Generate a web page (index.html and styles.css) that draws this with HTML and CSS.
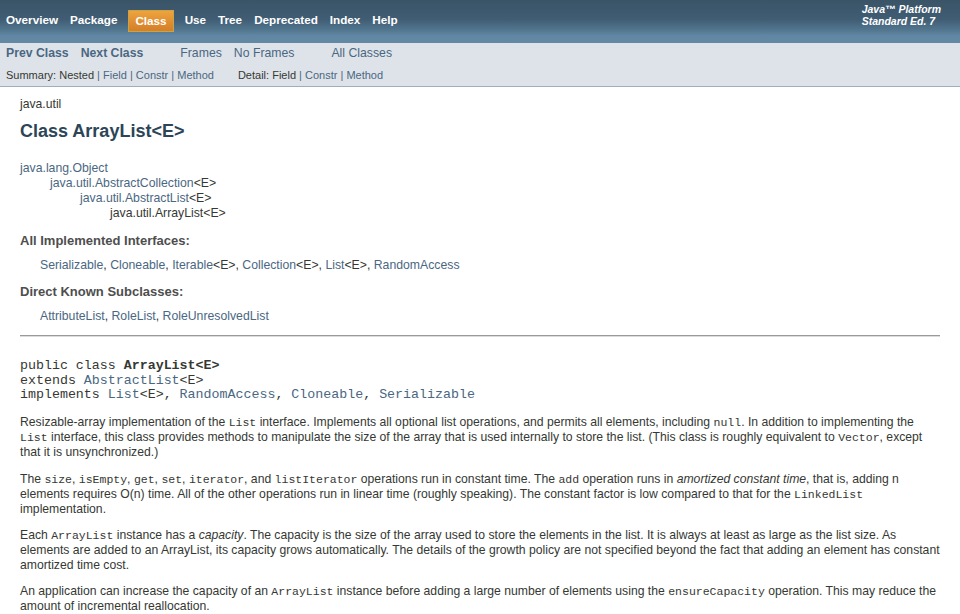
FILE: index.html
```html
<!DOCTYPE html>
<html>
<head>
<meta charset="utf-8">
<title>ArrayList</title>
<link rel="stylesheet" href="styles.css">
</head>
<body>
<div class="topnav">
  <ul class="navlist">
    <li>Overview</li>
    <li>Package</li>
    <li class="current">Class</li>
    <li>Use</li>
    <li>Tree</li>
    <li>Deprecated</li>
    <li>Index</li>
    <li>Help</li>
  </ul>
  <div class="about">Java™&nbsp;Platform<br>Standard&nbsp;Ed.&nbsp;7</div>
</div>
<div class="subnav">
  <div class="subrow">
    <ul class="sublist bold"><li><a href="#">Prev Class</a></li><li><a href="#">Next Class</a></li></ul>
    <ul class="sublist"><li><a href="#">Frames</a></li><li><a href="#">No Frames</a></li></ul>
    <ul class="sublist"><li><a href="#">All Classes</a></li></ul>
  </div>
  <div class="subrow2">
    <ul class="sumlist"><li>Summary:&nbsp;</li><li>Nested&nbsp;<a href="#">|&nbsp;</a></li><li><a href="#">Field&nbsp;|&nbsp;</a></li><li><a href="#">Constr&nbsp;|&nbsp;</a></li><li><a href="#">Method</a></li></ul>
    <ul class="sumlist"><li>Detail:&nbsp;</li><li>Field&nbsp;<a href="#">|&nbsp;</a></li><li><a href="#">Constr&nbsp;|&nbsp;</a></li><li><a href="#">Method</a></li></ul>
  </div>
</div>
<div class="header">
  <div class="subtitle">java.util</div>
  <h2 class="title">Class ArrayList&lt;E&gt;</h2>
</div>
<div class="content">
  <div class="inherit">
    <div class="ilevel"><a href="#">java.lang.Object</a></div>
    <div class="ilevel indent1"><a href="#">java.util.AbstractCollection</a>&lt;E&gt;</div>
    <div class="ilevel indent2"><a href="#">java.util.AbstractList</a>&lt;E&gt;</div>
    <div class="ilevel indent3">java.util.ArrayList&lt;E&gt;</div>
  </div>
  <dl class="info">
    <dt>All Implemented Interfaces:</dt>
    <dd><a href="#">Serializable</a>, <a href="#">Cloneable</a>, <a href="#">Iterable</a>&lt;E&gt;, <a href="#">Collection</a>&lt;E&gt;, <a href="#">List</a>&lt;E&gt;, <a href="#">RandomAccess</a></dd>
    <dt class="dt2">Direct Known Subclasses:</dt>
    <dd><a href="#">AttributeList</a>, <a href="#">RoleList</a>, <a href="#">RoleUnresolvedList</a></dd>
  </dl>
  <hr class="rule">
<pre class="sig">public class <b>ArrayList&lt;E&gt;</b>
extends <a href="#">AbstractList</a>&lt;E&gt;
implements <a href="#">List</a>&lt;E&gt;, <a href="#">RandomAccess</a>, <a href="#">Cloneable</a>, <a href="#">Serializable</a></pre>
  <div class="block">
    <p>Resizable-array implementation of the <code>List</code> interface. Implements all optional list operations, and permits all elements, including <code>null</code>. In addition to implementing the <code>List</code> interface, this class provides methods to manipulate the size of the array that is used internally to store the list. (This class is roughly equivalent to <code>Vector</code>, except that it is unsynchronized.)</p>
    <p>The <code>size</code>, <code>isEmpty</code>, <code>get</code>, <code>set</code>, <code>iterator</code>, and <code>listIterator</code> operations run in constant time. The <code>add</code> operation runs in <i>amortized constant time</i>, that is, adding n elements requires O(n) time. All of the other operations run in linear time (roughly speaking). The constant factor is low compared to that for the <code>LinkedList</code> implementation.</p>
    <p>Each <code>ArrayList</code> instance has a <i>capacity</i>. The capacity is the size of the array used to store the elements in the list. It is always at least as large as the list size. As elements are added to an ArrayList, its capacity grows automatically. The details of the growth policy are not specified beyond the fact that adding an element has constant amortized time cost.</p>
    <p>An application can increase the capacity of an <code>ArrayList</code> instance before adding a large number of elements using the <code>ensureCapacity</code> operation. This may reduce the amount of incremental reallocation.</p>
  </div>
</div>
</body>
</html>
```
FILE: styles.css
```css
body {
  margin: 0;
  font-family: "Liberation Sans", Arial, Helvetica, sans-serif;
  font-size: 12px;
  color: #353833;
  background: #ffffff;
}
a {
  color: #4a6782;
  text-decoration: none;
}
.topnav {
  box-sizing: border-box;
  height: 43px;
  padding-top: 10px;
  display: flex;
  justify-content: space-between;
  align-items: flex-start;
  background: linear-gradient(to bottom, #3a5367 0%, #405d74 45%, #52768f 70%, #5f86a2 82%, #6489a5 100%);
}
.navlist {
  display: flex;
  list-style: none;
  margin: 0;
  padding: 0;
}
.navlist li {
  padding: 3px 6px;
  font-size: 11.7px;
  line-height: 14px;
  font-weight: bold;
  color: #ffffff;
}
.navlist li.current {
  margin: 0 5px;
  border: 1px solid #c9a444;
  background: linear-gradient(to bottom, #eda43e 0%, #df8c30 60%, #d5802a 100%);
}
.about {
  margin: -7px 19px 0 0;
  font-size: 10.5px;
  line-height: 12px;
  font-weight: bold;
  font-style: italic;
  color: #ffffff;
}
.subnav {
  background: #dee3e9;
  border-bottom: 1px solid #9eadc0;
}
.subrow {
  display: flex;
}
.sublist {
  display: flex;
  list-style: none;
  margin: 0 25px 0 0;
  padding: 0;
}
.sublist li {
  padding: 3px 6px;
  font-size: 12.25px;
  line-height: 14px;
}
.sublist.bold li {
  font-weight: bold;
}
.subrow2 {
  display: flex;
  padding: 5px 0 4px 6px;
  font-size: 11px;
  line-height: 14px;
}
.sumlist {
  display: flex;
  list-style: none;
  margin: 0 24px 0 0;
  padding: 0;
}
.header {
  margin: 0 20px;
  padding-top: 5px;
}
.subtitle {
  margin-top: 5px;
  font-size: 12.2px;
  line-height: 14px;
}
.title {
  margin: 10px 0;
  font-size: 18px;
  line-height: 21px;
  color: #2c4557;
}
.content {
  padding: 9px 20px 10px;
  font-size: 12.25px;
}
.ilevel {
  line-height: 14px;
  padding-top: 1px;
}
.ilevel:first-child {
  padding-top: 0;
}
.indent1 { margin-left: 30px; }
.indent2 { margin-left: 60px; }
.indent3 { margin-left: 90px; }
.info {
  margin: 13px 0 0;
}
.info dt {
  font-size: 13px;
  line-height: 16px;
  font-weight: bold;
  color: #4e4e4e;
}
.info dt.dt2 {
  margin-top: 12px;
}
.info dd {
  margin: 9px 0 0 20px;
  line-height: 14px;
}
.rule {
  margin: 12px 0 0;
  height: 0;
  border: 0;
  border-top: 1px solid #9a9a9a;
  border-bottom: 1px solid #dcdcdc;
}
.sig {
  margin: 22px 0 0;
  font-family: "Liberation Mono", "Courier New", monospace;
  font-size: 13.3px;
  line-height: 14.5px;
  color: #353833;
}
.block {
  margin-top: 12.5px;
}
.block p {
  margin: 0 0 12px;
  font-size: 12.2px;
  line-height: 14.2px;
}
.block code {
  font-family: "Liberation Mono", "Courier New", monospace;
  font-size: 11.5px;
}
```
